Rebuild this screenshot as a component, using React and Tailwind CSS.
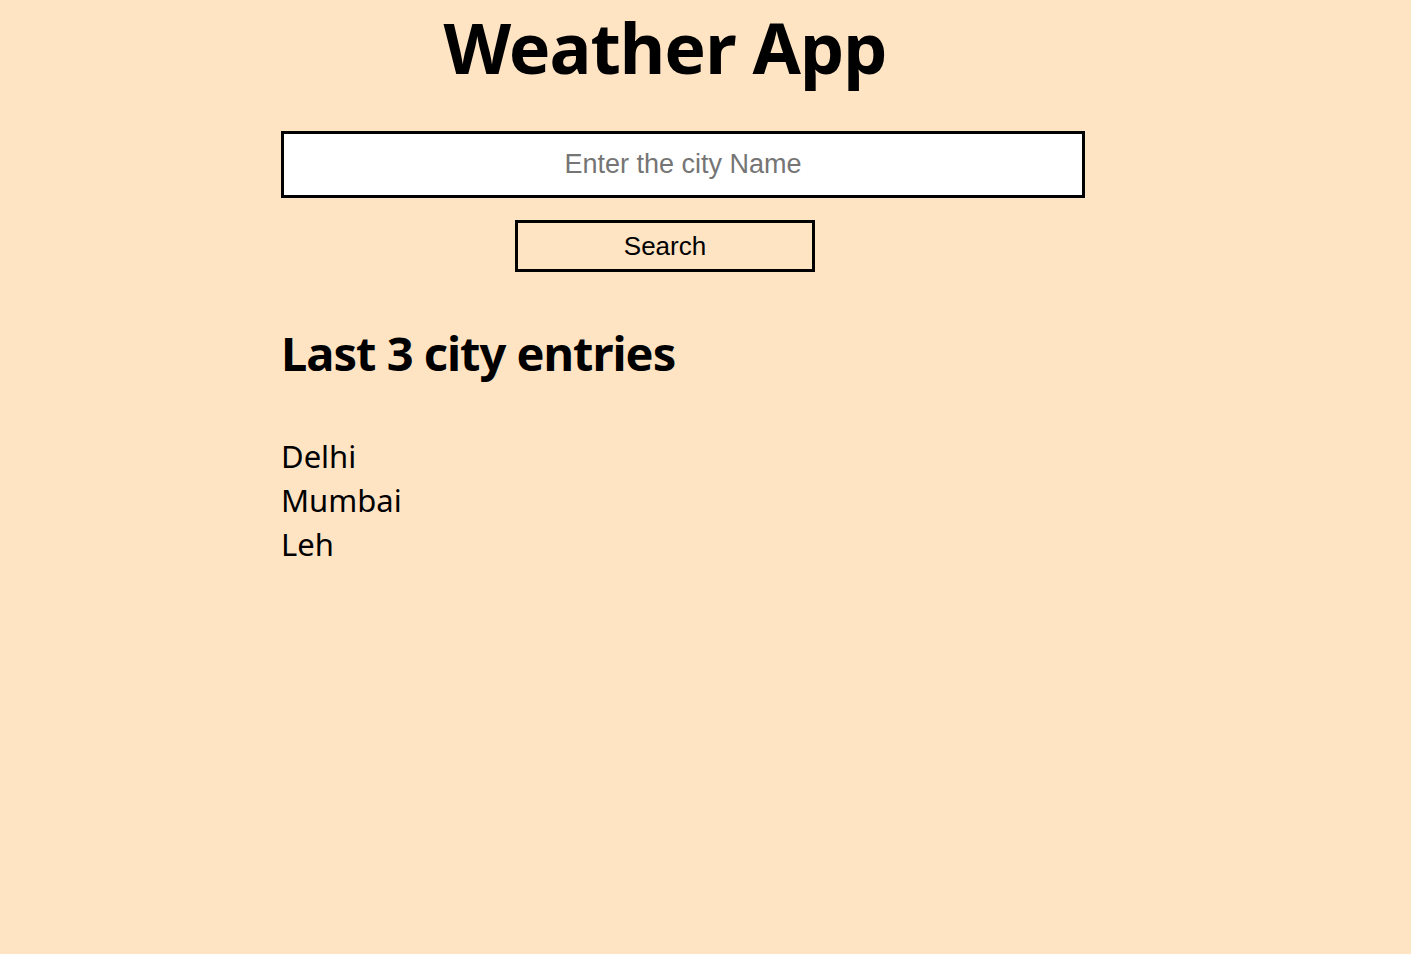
export default function App() {
  const cities = ['Delhi', 'Mumbai', 'Leh']

  return (
    <div className="min-h-screen bg-[#ffe4c4] font-['Noto_Sans',sans-serif] text-black">
      <div className="ml-[281px] w-[768px] pt-[11px]">
        {/* titulo */}
        <h1 className="text-center text-[70px] leading-[72px] font-bold tracking-[-1px]">Weather App</h1>

        <input
          type="text"
          placeholder="Enter the city Name"
          className="mt-[48px] block h-[67px] w-[804px] border-[3px] border-black bg-white text-center font-['Liberation_Sans',Arial,sans-serif] text-[27px] placeholder:text-[#757575] outline-none"
        />

        <div className="mt-[22px] flex justify-center">
          <button className="h-[52px] w-[300px] border-[3px] border-black font-['Liberation_Sans',Arial,sans-serif] text-[26px]">
            Search
          </button>
        </div>

        {/* ultimas cidades */}
        <h2 className="mt-[57px] text-[47px] leading-[48px] font-bold tracking-[-1px]">Last 3 city entries</h2>

        <ul className="mt-[57px]">
          {cities.map((c) => (
            <li key={c} className="text-[31px] leading-[44px]">{c}</li>
          ))}
        </ul>
      </div>
    </div>
  )
}
